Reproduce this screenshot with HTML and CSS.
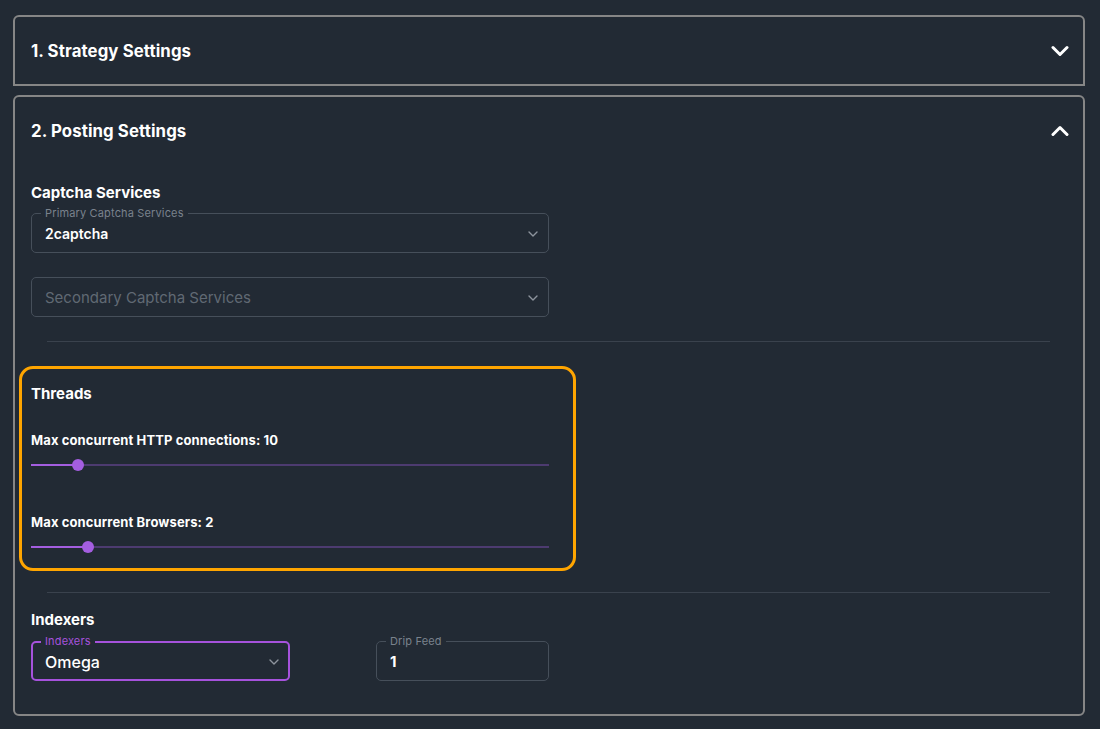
FILE: index.html
```html
<!DOCTYPE html>
<html>
<head>
<meta charset="utf-8">
<link rel="stylesheet" href="styles.css">
</head>
<body>
<div class="page">
  <section class="card card-collapsed">
    <header class="card-head">
      <h2 class="card-title">1. Strategy Settings</h2>
      <svg class="chev" width="18" height="12" viewBox="0 0 18 12"><path d="M2 2.5 L9 9.5 L16 2.5" fill="none" stroke="#fff" stroke-width="3" stroke-linecap="round" stroke-linejoin="round"/></svg>
    </header>
  </section>

  <section class="card card-open">
    <header class="card-head">
      <h2 class="card-title">2. Posting Settings</h2>
      <svg class="chev" width="18" height="12" viewBox="0 0 18 12"><path d="M2 9.5 L9 2.5 L16 9.5" fill="none" stroke="#fff" stroke-width="3" stroke-linecap="round" stroke-linejoin="round"/></svg>
    </header>

    <div class="card-body">
      <div class="group group-captcha">
        <h3 class="group-title">Captcha Services</h3>
        <div class="field field-wide">
          <span class="field-label">Primary Captcha Services</span>
          <span class="field-value">2captcha</span>
          <svg class="caret" width="10" height="6" viewBox="0 0 10 6"><path d="M1 1 L5 5 L9 1" fill="none" stroke="#8d949d" stroke-width="1.4" stroke-linecap="round" stroke-linejoin="round"/></svg>
        </div>
        <div class="field field-wide field-second">
          <span class="field-placeholder">Secondary Captcha Services</span>
          <svg class="caret" width="10" height="6" viewBox="0 0 10 6"><path d="M1 1 L5 5 L9 1" fill="none" stroke="#8d949d" stroke-width="1.4" stroke-linecap="round" stroke-linejoin="round"/></svg>
        </div>
      </div>

      <hr class="divider">

      <div class="group group-threads">
        <div class="highlight"></div>
        <h3 class="group-title">Threads</h3>
        <div class="slider-label">Max concurrent HTTP connections: 10</div>
        <div class="slider">
          <div class="slider-fill" style="width: 47px"></div>
          <div class="slider-thumb" style="left: 47px"></div>
        </div>
        <div class="slider-label slider-label-2">Max concurrent Browsers: 2</div>
        <div class="slider">
          <div class="slider-fill" style="width: 57px"></div>
          <div class="slider-thumb" style="left: 57px"></div>
        </div>
      </div>

      <hr class="divider">

      <div class="group group-indexers">
        <h3 class="group-title">Indexers</h3>
        <div class="row">
          <div class="field field-indexers field-active">
            <span class="field-label">Indexers</span>
            <span class="field-value field-value-lg">Omega</span>
            <svg class="caret" width="10" height="6" viewBox="0 0 10 6"><path d="M1 1 L5 5 L9 1" fill="none" stroke="#8d949d" stroke-width="1.4" stroke-linecap="round" stroke-linejoin="round"/></svg>
          </div>
          <div class="field field-drip">
            <span class="field-label">Drip Feed</span>
            <span class="field-value field-value-num">1</span>
          </div>
        </div>
      </div>
    </div>
  </section>
</div>
</body>
</html>
```

FILE: styles.css
```css
* { box-sizing: border-box; }

html, body {
  margin: 0;
  padding: 0;
  background: #222a34;
  font-family: Inter, "Noto Sans", "DejaVu Sans", sans-serif;
  color: #ffffff;
}

.page {
  padding: 15px 15px 0 13px;
  display: flex;
  flex-direction: column;
  gap: 9px;
  width: 1100px;
}

.card {
  border: 2px solid #868686;
  background: #222a34;
}

.card-collapsed {
  border-radius: 6px 6px 0 0;
}

.card-open {
  border-radius: 6px;
}

.card-head {
  height: 67px;
  display: flex;
  align-items: center;
  justify-content: space-between;
  padding: 0 14px 0 16px;
}

.card-title {
  margin: 0;
  font-size: 16.8px;
  font-weight: 700;
  letter-spacing: 0.1px;
}

.chev { display: block; }

.card-body {
  padding: 19px 16px 33px 16px;
}

.group-title {
  margin: 0;
  font-size: 15px;
  line-height: 20px;
  font-weight: 700;
}

.field {
  position: relative;
  height: 40px;
  border: 1px solid #464f5a;
  border-radius: 5px;
  display: flex;
  align-items: center;
  padding: 0 13px;
}

.field-wide {
  width: 518px;
  margin-top: 10px;
}

.field-second {
  margin-top: 24px;
}

.field-label {
  position: absolute;
  top: -7px;
  left: 9px;
  padding: 0 4px;
  background: #222a34;
  font-size: 11px;
  line-height: 12px;
  letter-spacing: 0.15px;
  color: #7a828d;
}

.field-value {
  font-size: 14px;
  font-weight: 600;
  color: #ffffff;
  padding-top: 1px;
}

.field-value-lg {
  font-size: 16px;
  font-weight: 500;
}

.field-value-num {
  font-size: 15px;
  font-weight: 700;
}

.field-placeholder {
  font-size: 15px;
  color: #606973;
}

.caret {
  position: absolute;
  right: 10px;
  top: 17px;
}

.divider {
  border: 0;
  border-top: 1px solid #3a424d;
  margin: 24px 17px 0 16px;
  height: 0;
}

.group-threads {
  position: relative;
  padding-top: 42px;
  padding-bottom: 20px;
}

.highlight {
  position: absolute;
  left: -12px;
  top: 24px;
  width: 557px;
  height: 205px;
  border: 3px solid #ffa500;
  border-radius: 14px;
  pointer-events: none;
}

.slider-label {
  margin-top: 27px;
  font-size: 13px;
  line-height: 18px;
  font-weight: 700;
  letter-spacing: 0.12px;
}

.slider-label-2 {
  margin-top: 47px;
}

.slider {
  position: relative;
  width: 518px;
  height: 2px;
  background: #4d3b70;
  margin-top: 15px;
}

.slider-fill {
  position: absolute;
  left: 0;
  top: 0;
  height: 2px;
  background: #a45ee0;
}

.slider-thumb {
  position: absolute;
  top: -5px;
  width: 12px;
  height: 12px;
  margin-left: -6px;
  border-radius: 50%;
  background: #a45ee0;
}

.group-indexers {
  padding-top: 17px;
}

.row {
  display: flex;
  gap: 86px;
  margin-top: 11px;
}

.field-indexers {
  width: 259px;
}

.field-active {
  border: 2px solid #a652dc;
  padding: 0 12px;
}

.field-active .field-label {
  color: #a652dc;
  top: -8px;
  left: 8px;
}

.field-active .caret {
  right: 9px;
  top: 16px;
}

.field-drip {
  width: 173px;
}
```
